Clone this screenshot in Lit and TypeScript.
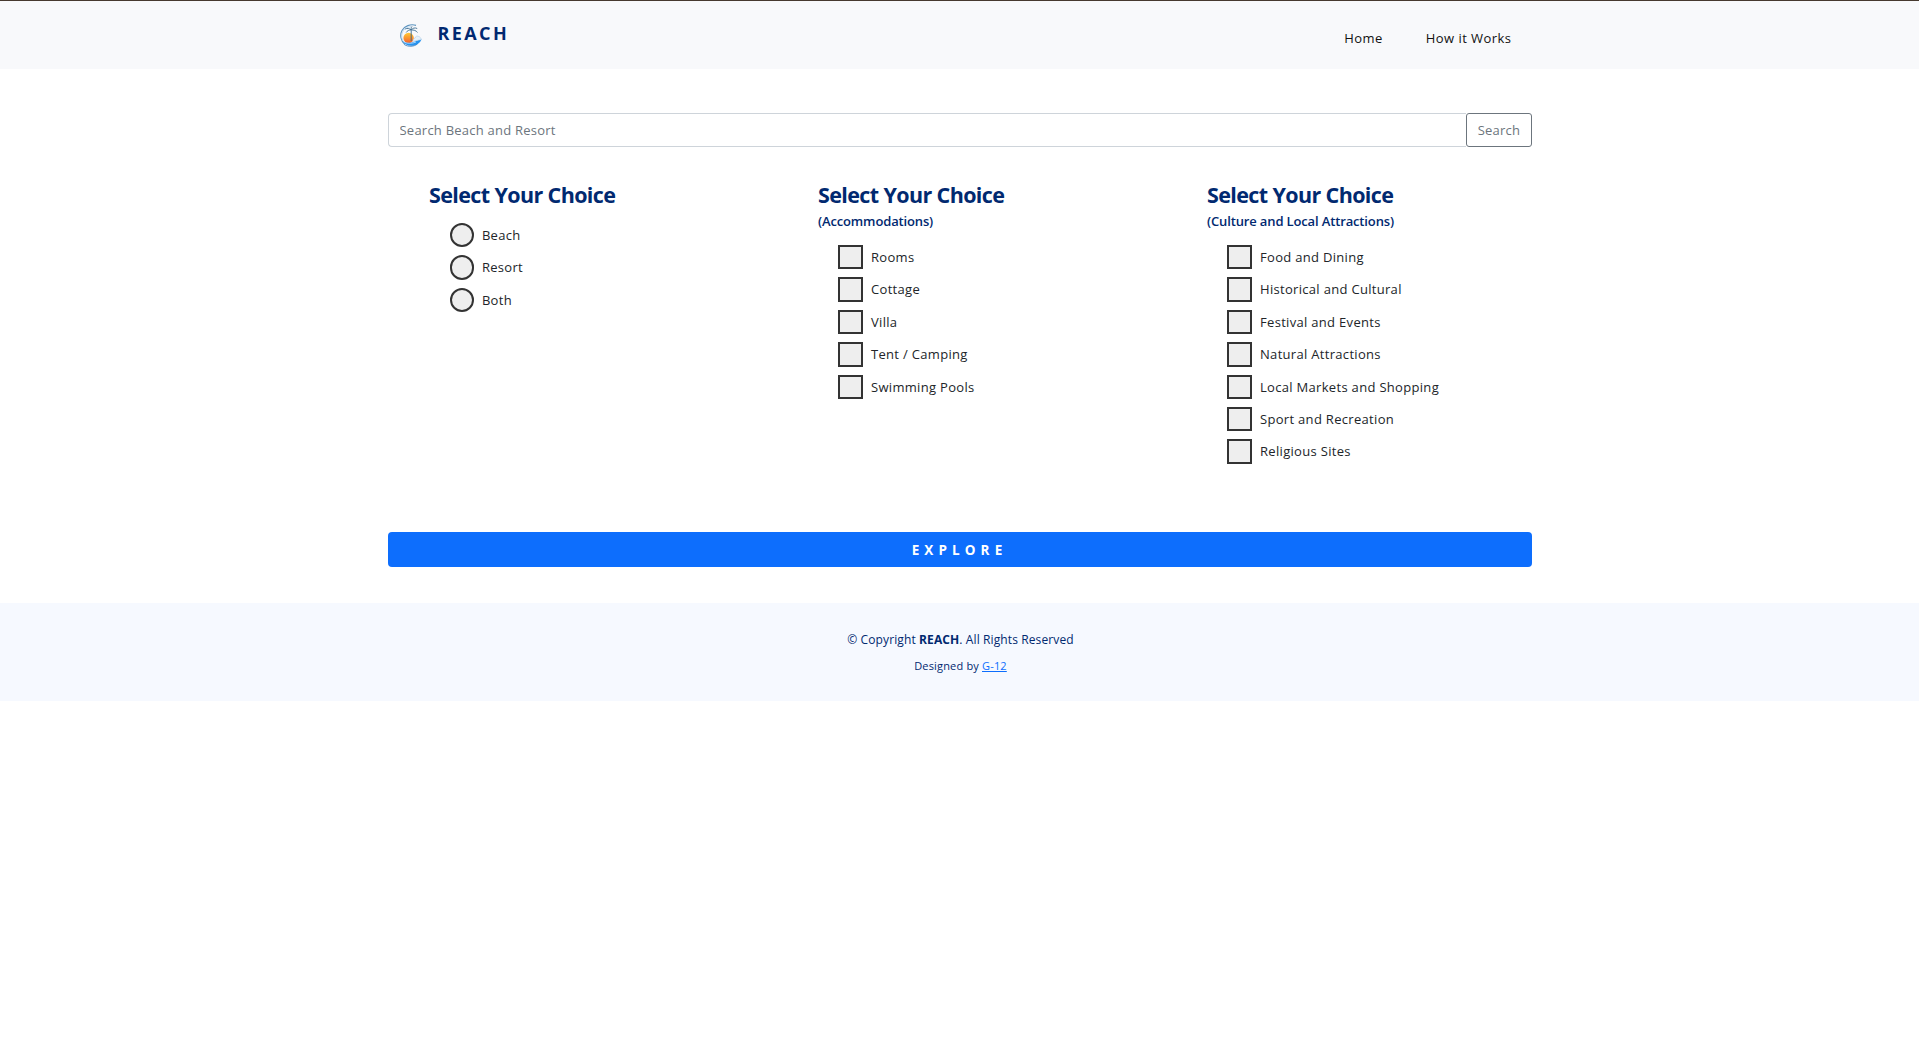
import { LitElement, html, css, svg } from "lit";
import { customElement } from "lit/decorators.js";

interface ChoiceGroup {
  title: string;
  note?: string;
  kind: "radio" | "checkbox";
  name: string;
  options: string[];
}

const GROUPS: ChoiceGroup[] = [
  { title: "Select Your Choice", kind: "radio", name: "place", options: ["Beach", "Resort", "Both"] },
  {
    title: "Select Your Choice",
    note: "(Accommodations)",
    kind: "checkbox",
    name: "accommodation",
    options: ["Rooms", "Cottage", "Villa", "Tent / Camping", "Swimming Pools"],
  },
  {
    title: "Select Your Choice",
    note: "(Culture and Local Attractions)",
    kind: "checkbox",
    name: "attraction",
    options: [
      "Food and Dining",
      "Historical and Cultural",
      "Festival and Events",
      "Natural Attractions",
      "Local Markets and Shopping",
      "Sport and Recreation",
      "Religious Sites",
    ],
  },
];

const logo = svg`
  <defs>
    <linearGradient id="sun" x1="0" y1="0" x2="0" y2="1">
      <stop offset="0" stop-color="#ffc933" />
      <stop offset="1" stop-color="#f2602f" />
    </linearGradient>
  </defs>
  <circle cx="8.600" cy="14" r="5.200" fill="url(#sun)" />
  <path d="M16 1.400C10.500-.3 4.500 2 2 6.500S.8 17 5 20.500" fill="none" stroke="#5c93bf" stroke-width="1.100" />
  <path d="M11 2.600C6.500 3 3.200 5.500 2.200 9S1.900 14.500 3 17" fill="none" stroke="#b9d5ea" stroke-width=".8" />
  <path d="M2.500 17c2.800 2 7.500 2.300 11 1c2.700-1 4.700-2.200 8-2.700c-1.300 4-5.300 6.500-10.300 6.500c-3.800 0-7.100-1.800-8.700-4.800z" fill="#2694f0" />
  <path d="M3.500 17.800c3.200 2 8 2 12.500.3" fill="none" stroke="#d3e9ff" stroke-width=".7" />
  <path d="M4.500 20.700c3.500 2.200 9.500 2.200 13-.8" fill="none" stroke="#3a78b8" stroke-width=".8" />
  <path d="M12.800 17.500c.2-1.800 1-2.900 2.200-3.400c.4-1.900 2.300-2.500 3.600-1.700c1.500.5 2.500 1.800 2.700 3.300c-3 .2-5.500 1-8.500 1.800z" fill="#e6f0f8" stroke="#9cc2e2" stroke-width=".5" />
  <path d="M11.200 6.400V17" fill="none" stroke="#3a6788" stroke-width=".9" />
  <path d="M11.200 6c-1.700-1.700-4-2-6-1M11.200 6c-2-.2-4 .7-5 2.500M11.200 6c1.300-2 3.800-2.600 6-1.500M11.200 6c2.400-.2 5 .5 6.300 2.500M11.200 6c-.3-1.500 0-2.700.8-3.600" fill="none" stroke="#3f6f92" stroke-width=".9" />
`;

@customElement("app-root")
export class AppRoot extends LitElement {
  static styles = css`
    :host {
      display: block;
      min-height: 1061px;
      background: #fff;
      color: #212529;
      font-family: "Open Sans", "Noto Sans", sans-serif;
      font-size: 13px;
    }
    * { box-sizing: border-box; }
    .header { height: 69px; background: #f8f9fb; border-top: 1px solid #46392f; }
    .wrap { width: 1144px; margin: 0 auto; }
    .bar { display: flex; align-items: center; justify-content: space-between; height: 68px; padding: 0 20px 0 12px; }
    .brand { display: flex; align-items: center; gap: 16px; }
    .logo { width: 22px; height: 23px; }
    .brand-name { color: #012970; font-size: 18px; font-weight: 700; letter-spacing: 2.4px; line-height: 24px; padding-bottom: 4px; }
    .nav { display: flex; gap: 43px; padding-top: 6px; letter-spacing: 0.45px; }
    .nav a { color: #111; text-decoration: none; }
    .main { padding-top: 44px; }
    .search { display: flex; height: 34px; }
    .field { flex: 1; min-width: 0; border: 1px solid #ced4da; border-right: 0; border-radius: 4px 0 0 4px; padding: 0 11px; font: inherit; letter-spacing: 0.23px; outline: 0; }
    .field::placeholder { color: #6c757d; opacity: 1; }
    .find { width: 66px; border: 1px solid #6c757d; border-radius: 3px; background: #fff; color: #6c757d; font: inherit; letter-spacing: 0.25px; padding: 0 0 0 1px; }
    .groups { display: grid; grid-template-columns: repeat(3, 389px); padding: 34px 0 0 41.5px; height: 385px; }
    .title { margin: 0; color: #012970; font-size: 21.5px; font-weight: 700; line-height: 28px; letter-spacing: -0.62px; }
    .note { color: #012970; font-weight: 600; line-height: 18px; letter-spacing: -0.14px; margin-top: 3px; height: 22px; }
    .options { display: flex; flex-direction: column; gap: 8px; padding: 14px 0 0 20.5px; }
    .noted .options { padding: 11px 0 0 20px; }
    .option { display: flex; align-items: center; gap: 8px; height: 24.4px; letter-spacing: 0.31px; }
    .option span { padding-bottom: 0.3px; }
    .box { appearance: none; margin: 0; width: 25px; height: 24.4px; border: 2px solid #333; background: #eee; }
    .round { width: 24.4px; border-radius: 50%; }
    .box:checked { background: #0d6efd; }
    .explore { display: block; width: 100%; height: 35px; border: 0; border-radius: 4px; background: #0d6efd; color: #fff; font: inherit; font-size: 13.5px; font-weight: 700; letter-spacing: 5.1px; }
    .footer { margin-top: 36px; height: 98px; padding: 27px 0 0 2px; background: #f6f9ff; color: #012970; text-align: center; }
    .copy { font-size: 12px; line-height: 20px; letter-spacing: 0.11px; }
    .by { font-size: 11px; line-height: 20px; letter-spacing: 0.17px; padding-top: 6px; }
    .by a { color: #0d6efd; }
  `;

  private group(g: ChoiceGroup) {
    return html`<section class=${g.note ? "noted" : ""}>
      <h2 class="title">${g.title}</h2>
      ${g.note ? html`<div class="note">${g.note}</div>` : null}
      <div class="options">
        ${g.options.map(
          (o) => html`<label class="option"><input class="box ${g.kind === "radio" ? "round" : ""}" type=${g.kind} name=${g.name} /><span>${o}</span></label>`
        )}
      </div>
    </section>`;
  }

  render() {
    return html`
      <header class="header">
        <div class="wrap bar">
          <div class="brand"><svg class="logo" viewBox="0 0 22 23">${logo}</svg><span class="brand-name">REACH</span></div>
          <nav class="nav"><a>Home</a><a>How it Works</a></nav>
        </div>
      </header>
      <main class="wrap main">
        <div class="search"><input class="field" placeholder="Search Beach and Resort" /><button class="find">Search</button></div>
        <div class="groups">${GROUPS.map((g) => this.group(g))}</div>
        <button class="explore">EXPLORE</button>
      </main>
      <footer class="footer">
        <div class="copy">© Copyright <b>REACH</b>. All Rights Reserved</div>
        <div class="by">Designed by <a href="#">G-12</a></div>
      </footer>
    `;
  }
}
